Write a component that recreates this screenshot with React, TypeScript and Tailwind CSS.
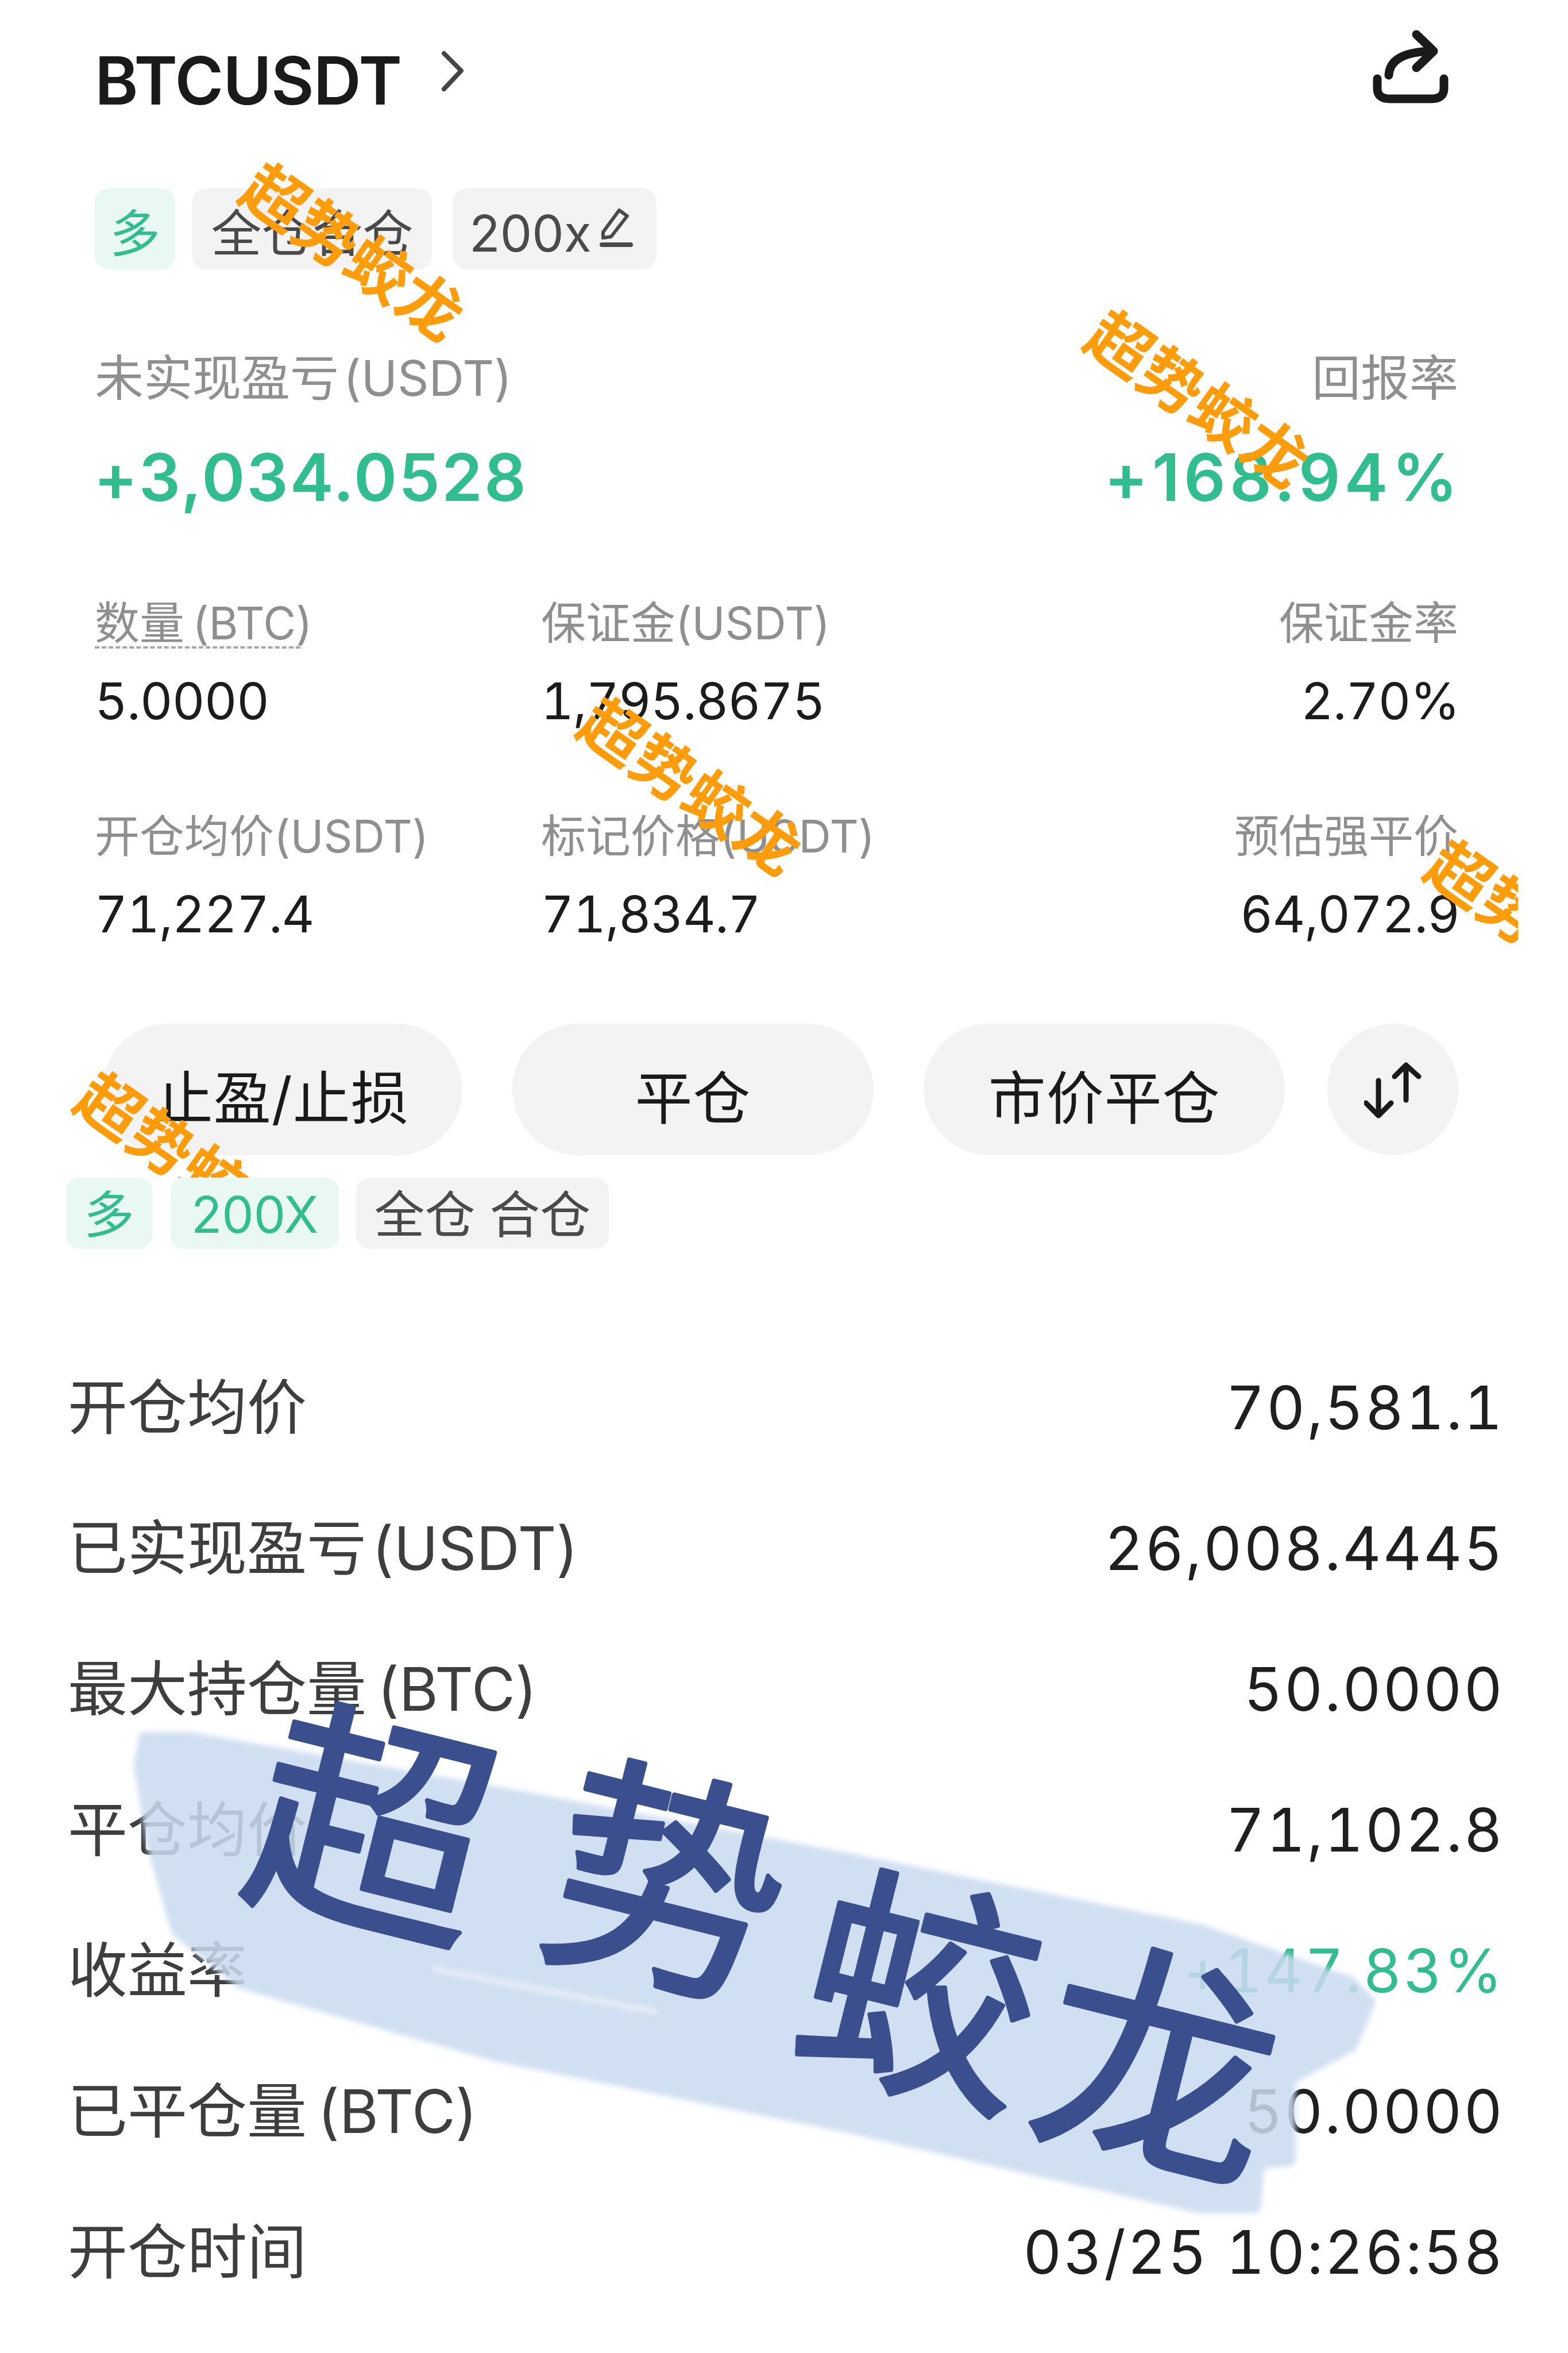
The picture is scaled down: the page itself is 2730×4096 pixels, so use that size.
const Watermark = ({ className }: { className: string }) => (
  <div className={`absolute -translate-x-1/2 -translate-y-1/2 rotate-[35deg] whitespace-nowrap text-[110px] leading-none font-semibold text-[#ff9c0c] ${className}`}>
    超势蛟龙
  </div>
);

const Stat = ({ label, value, right, dashed }: { label: string; value: string; right?: boolean; dashed?: boolean }) => (
  <div className={`flex flex-col ${right ? 'items-end' : 'items-start'}`}>
    <div className="relative h-[90px] flex items-center text-[78px] text-[#8f8f8f] whitespace-nowrap">
      {label}
      {dashed && <div className="absolute left-0 top-[86px] w-[358px] border-b-[4px] border-dashed border-[#a8a8a8]" />}
    </div>
    <div className={`mt-[41px] h-[100px] flex items-center text-[88px] tabular-nums tracking-[-1px] text-[#1c1c1c] whitespace-nowrap ${right ? 'mr-[-2px]' : ''}`}>{value}</div>
  </div>
);

const ActionButton = ({ text, className }: { text: string; className: string }) => (
  <div className={`h-[229px] rounded-full bg-[#f3f3f3] flex items-center justify-center pt-[30px] text-[100px] text-[#1a1a1a] tracking-[1px] ${className}`}>
    {text}
  </div>
);

const rows: { label: string; value: string; green?: boolean }[] = [
  { label: '开仓均价', value: '70,581.1' },
  { label: '已实现盈亏\u200A(USDT)', value: '26,008.4445' },
  { label: '最大持仓量\u2009(BTC)', value: '50.0000' },
  { label: '平仓均价', value: '71,102.8' },
  { label: '收益率', value: '+147.83%', green: true },
  { label: '已平仓量\u2009(BTC)', value: '50.0000' },
  { label: '开仓时间', value: '03/25 10:26:58' },
];

const strokeProps = { fill: '#3b4f8f', stroke: '#3b4f8f', strokeWidth: 8, strokeLinejoin: 'round', strokeLinecap: 'round' } as const;

export default function App() {
  return (
    <div className="relative w-[2730px] h-[4096px] bg-white overflow-hidden font-['Inter','Noto_Sans_CJK_SC',sans-serif]">
      {/* Position card */}
      <div className="relative w-[2643px] h-[2050px] overflow-hidden pl-[165px] pr-[104px]">
        <div className="h-[276px] flex items-center">
          <span className="text-[115px] font-semibold text-[#1a1a1a] tracking-[-1px] leading-none pt-[4px]">BTCUSDT</span>
          <svg className="ml-[68px] -mt-[28px]" width="44" height="72" viewBox="0 0 44 72" fill="none" stroke="#444" strokeWidth="8" strokeLinecap="round" strokeLinejoin="round">
            <path d="M6 5 L36 35 L6 67" />
          </svg>
          <svg className="ml-auto mr-[14px] -mt-[46px]" width="135" height="130" viewBox="0 0 135 130" fill="none" stroke="#1a1a1a" strokeWidth="15" strokeLinecap="round" strokeLinejoin="round">
            <path d="M8 87 V104 Q8 122 30 122 H102 Q124 122 124 104 V87" />
            <path d="M28 81 Q30 41 102 39" />
            <path d="M76 10 L106 39 L76 68" />
          </svg>
        </div>

        <div className="mt-[52px] h-[141px] flex text-[88px] text-[#4a4a4a]">
          <div className="w-[140px] pt-[14px] rounded-[24px] bg-[#e9f8f2] text-[#31bd8e] flex items-center justify-center">多</div>
          <div className="ml-[30px] w-[417px] pt-[14px] rounded-[24px] bg-[#f3f3f3] flex items-center justify-center">全仓合仓</div>
          <div className="ml-[37px] w-[354px] pt-[14px] rounded-[24px] bg-[#f3f3f3] flex items-center pl-[28px]">
            <span>200x</span>
            <svg className="ml-[12px] -mt-[20px]" width="60" height="72" viewBox="0 0 60 72" fill="none" stroke="#4a4a4a" strokeWidth="6" strokeLinejoin="round" strokeLinecap="round">
              <path d="M8 44 L36 6 L50 16 L22 52 L8 54 Z" />
              <path d="M6 66 H56" strokeWidth="8" />
            </svg>
          </div>
        </div>

        <div className="mt-[140px] h-[100px] flex items-center justify-between text-[85px] text-[#8f8f8f]">
          <span>未实现盈亏{'\u200A'}(USDT)</span>
          <span>回报率</span>
        </div>
        <div className="mt-[51px] h-[140px] flex items-center justify-between text-[114px] font-semibold text-[#31bd8e]">
          <span className="tracking-[3px] -ml-[2px]">+3,034.0528</span>
          <span className="tracking-[7px] mr-[-6px]">+168.94%</span>
        </div>

        <div className="mt-[139px] grid grid-cols-[777px_1fr_800px] gap-y-[140px]">
          <Stat label={'数量\u2009(BTC)'} value="5.0000" dashed />
          <Stat label="保证金(USDT)" value="1,795.8675" />
          <Stat label="保证金率" value="2.70%" right />
          <Stat label="开仓均价(USDT)" value="71,227.4" />
          <Stat label="标记价格(USDT)" value="71,834.7" />
          <Stat label="预估强平价" value="64,072.9" right />
        </div>

        <div className="mt-[141px] ml-[13px] flex">
          <ActionButton text="止盈/止损" className="w-[627px]" />
          <ActionButton text="平仓" className="ml-[87px] w-[630px]" />
          <ActionButton text="市价平仓" className="ml-[87px] w-[629px]" />
          <div className="ml-[74px] w-[228px] h-[229px] rounded-full bg-[#f3f3f3] flex items-center justify-center">
            <svg width="100" height="100" viewBox="0 0 100 100" fill="none" stroke="#1a1a1a" strokeWidth="9" strokeLinecap="round" strokeLinejoin="round">
              <path d="M25 34 V95 M3 73 L25 95 L47 73" />
              <path d="M73 68 V7 M53 27 L73 7 L95 27" />
            </svg>
          </div>
        </div>

        <Watermark className="left-[614px] top-[439px]" />
        <Watermark className="left-[2085px] top-[695px]" />
        <Watermark className="left-[1202px] top-[1369px]" />
        <Watermark className="left-[2677px] top-[1617px]" />
        <Watermark className="left-[326px] top-[2021px]" />
      </div>

      {/* Closed position history */}
      <div className="pl-[118px] pr-[111px]">
        <div className="-ml-[3px] h-[124px] flex text-[88px]">
          <div className="w-[150px] pt-[4px] rounded-[24px] bg-[#e9f8f2] text-[#31bd8e] flex items-center justify-center">多</div>
          <div className="ml-[32px] w-[293px] pt-[4px] rounded-[24px] bg-[#e9f8f2] text-[#31bd8e] flex items-center justify-center">200X</div>
          <div className="ml-[30px] w-[440px] pt-[4px] rounded-[24px] bg-[#f3f3f3] text-[#4a4a4a] flex items-center justify-center">全仓 合仓</div>
        </div>
        <div className="mt-[153px]">
          {rows.map(row => (
            <div key={row.label} className="h-[245px] flex items-center justify-between">
              <span className="text-[104px] text-[#3e3e3e]">{row.label}</span>
              <span className={`text-[104px] tabular-nums tracking-[3px] ${row.green ? 'text-[#31bd8e]' : 'text-[#1f1f1f]'}`}>{row.value}</span>
            </div>
          ))}
        </div>
      </div>

      {/* Brush stroke sticker */}
      <svg className="absolute left-0 top-0 pointer-events-none" width="2730" height="4096" viewBox="0 0 2730 4096">
        <defs>
          <filter id="soft">
            <feGaussianBlur stdDeviation="5" />
          </filter>
        </defs>
        <g opacity="0.86" filter="url(#soft)">
          <path
            fill="#c9daef"
            stroke="#c9daef"
            strokeWidth="24"
            strokeLinejoin="round"
            d="M253 3027 L330 3027 L866 3122 L1478 3238 L2091 3362 L2351 3453 L2382 3486 L2351 3560 L2244 3618 L2244 3759 L2190 3763 L2183 3841 L2091 3841 L1478 3701 L866 3577 L420 3450 L310 3360 L268 3213 L245 3073 Z"
          />
          <path d="M758 3428 L1141 3502" fill="none" stroke="#e3ecf7" strokeWidth="10" strokeLinecap="round" />
        </g>
        <g fontSize="410" textAnchor="middle" {...strokeProps}>
          <text x="645" y="3330" transform="rotate(14 645 3190)">超</text>
          <text x="1160" y="3430" transform="rotate(14 1160 3290)">势</text>
          <text x="1600" y="3620" transform="rotate(14 1600 3480)">蛟</text>
          <text x="2014" y="3745" transform="rotate(14 2014 3605)">龙</text>
        </g>
      </svg>
    </div>
  );
}
